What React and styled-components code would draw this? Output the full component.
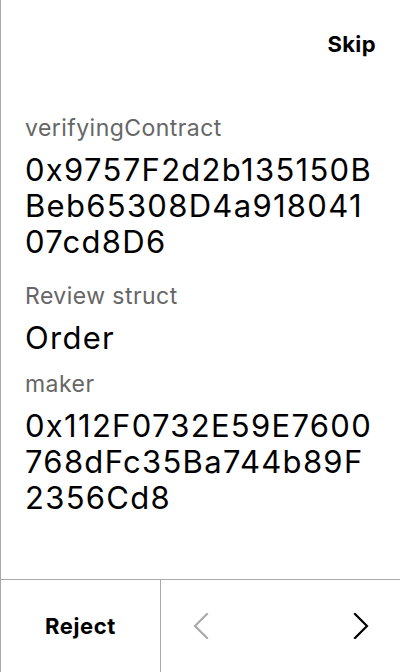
import React from "react";
import styled, { createGlobalStyle } from "styled-components";

const GlobalStyle = createGlobalStyle`
  html, body {
    margin: 0;
    padding: 0;
    background: #fff;
  }
  body {
    font-family: Inter, "Noto Sans", sans-serif;
    -webkit-font-smoothing: antialiased;
  }
`;

const Screen = styled.div`
  width: 400px;
  height: 672px;
  box-sizing: border-box;
  border-left: 1px solid #a9a9a9;
  display: flex;
  flex-direction: column;
  background: #fff;
  color: #000;
`;

const Header = styled.div`
  display: flex;
  justify-content: flex-end;
  align-items: flex-start;
  padding: 30px 24px 0 24px;
  height: 86px;
  box-sizing: border-box;
`;

const SkipButton = styled.button`
  border: none;
  background: none;
  padding: 0;
  font-family: inherit;
  font-size: 22px;
  font-weight: 700;
  letter-spacing: 0.4px;
  line-height: 28px;
  color: #000;
`;

const Content = styled.div`
  flex: 1;
  display: flex;
  flex-direction: column;
  padding: 30px 24px 0 24px;
`;

const Label = styled.div`
  font-size: 23px;
  line-height: 24px;
  letter-spacing: 0.45px;
  color: #666;
  margin-top: ${(p) => p.$gap || 0}px;
`;

const Value = styled.div`
  font-size: 31px;
  line-height: 36px;
  letter-spacing: 1.3px;
  color: #000;
  margin-top: 12px;
`;

const Line = styled.div`
  white-space: nowrap;
`;

const Footer = styled.div`
  height: 92px;
  border-top: 1px solid #a9a9a9;
  display: flex;
`;

const RejectButton = styled.button`
  width: 160px;
  border: none;
  border-right: 1px solid #a9a9a9;
  background: none;
  font-family: inherit;
  font-size: 22px;
  font-weight: 700;
  letter-spacing: 0.6px;
  color: #000;
  padding: 0;
`;

const Nav = styled.div`
  flex: 1;
  display: flex;
  align-items: center;
  justify-content: space-between;
  padding: 0 31px 0 32px;
`;

const NavButton = styled.button`
  border: none;
  background: none;
  padding: 0;
  display: flex;
  color: ${(p) => (p.disabled ? "#aaa" : "#000")};
`;

const Chevron = ({ dir }) => (
  <svg width="16" height="26" viewBox="0 0 16 26" fill="none">
    <path
      d={dir === "left" ? "M14 1 L2 13 L14 25" : "M2 1 L14 13 L2 25"}
      stroke="currentColor"
      strokeWidth="2.2"
      strokeLinecap="square"
    />
  </svg>
);

const fields = [
  {
    label: "verifyingContract",
    lines: ["0x9757F2d2b135150B", "Beb65308D4a918041", "07cd8D6"],
    gap: 0,
  },
  { label: "Review struct", lines: ["Order"], gap: 24 },
  {
    label: "maker",
    lines: ["0x112F0732E59E7600", "768dFc35Ba744b89F", "2356Cd8"],
    gap: 16,
  },
];

export default function App() {
  return (
    <>
      <GlobalStyle />
      <Screen>
        <Header>
          <SkipButton>Skip</SkipButton>
        </Header>
        <Content>
          {fields.map((f) => (
            <React.Fragment key={f.label}>
              <Label $gap={f.gap}>{f.label}</Label>
              <Value>
                {f.lines.map((l) => (
                  <Line key={l}>{l}</Line>
                ))}
              </Value>
            </React.Fragment>
          ))}
        </Content>
        <Footer>
          <RejectButton>Reject</RejectButton>
          <Nav>
            <NavButton disabled>
              <Chevron dir="left" />
            </NavButton>
            <NavButton>
              <Chevron dir="right" />
            </NavButton>
          </Nav>
        </Footer>
      </Screen>
    </>
  );
}
